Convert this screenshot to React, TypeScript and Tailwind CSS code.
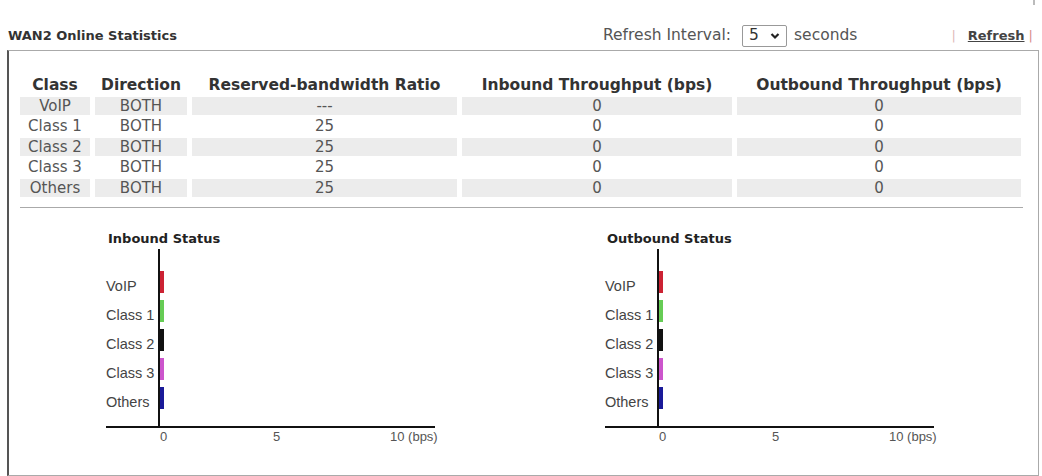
const rows = [
  { name: "VoIP", dir: "BOTH", ratio: "---", inb: "0", outb: "0" },
  { name: "Class 1", dir: "BOTH", ratio: "25", inb: "0", outb: "0" },
  { name: "Class 2", dir: "BOTH", ratio: "25", inb: "0", outb: "0" },
  { name: "Class 3", dir: "BOTH", ratio: "25", inb: "0", outb: "0" },
  { name: "Others", dir: "BOTH", ratio: "25", inb: "0", outb: "0" },
];

const bars = [
  { label: "VoIP", color: "bg-[#cc2233]", top: "top-[40px]", ltop: "top-[47px]" },
  { label: "Class 1", color: "bg-[#66cc55]", top: "top-[69px]", ltop: "top-[76px]" },
  { label: "Class 2", color: "bg-[#111111]", top: "top-[98px]", ltop: "top-[105px]" },
  { label: "Class 3", color: "bg-[#cc55cc]", top: "top-[127px]", ltop: "top-[134px]" },
  { label: "Others", color: "bg-[#1a1a99]", top: "top-[156px]", ltop: "top-[163px]" },
];

const gridCols = "grid grid-cols-[70px_92px_265px_270px_284px] gap-x-[5px]";

function StatusChart({ title }: { title: string }) {
  return (
    <div className="relative w-[340px] h-[220px]">
      <div className="absolute left-[2px] top-0 text-[13px] leading-[16px] font-bold text-[#222]">{title}</div>
      <div className="absolute left-[52px] top-[18px] w-[2px] h-[179px] bg-[#111]" />
      <div className="absolute left-0 top-[195px] w-[329px] h-[2px] bg-[#111]" />
      {bars.map((b) => (
        <div key={b.label}>
          <div className={`absolute left-[54px] w-[4px] h-[22px] ${b.color} ${b.top}`} />
          <div
            className={`absolute left-0 ${b.ltop} font-['Liberation_Sans',Arial,sans-serif] text-[14.5px] leading-[16px] text-[#444]`}
          >
            {b.label}
          </div>
        </div>
      ))}
      <div className="absolute top-[199px] left-[54px] font-['Liberation_Sans',Arial,sans-serif] text-[13px] leading-[14px] text-[#555]">0</div>
      <div className="absolute top-[199px] left-[167px] font-['Liberation_Sans',Arial,sans-serif] text-[13px] leading-[14px] text-[#555]">5</div>
      <div className="absolute top-[199px] left-[284px] font-['Liberation_Sans',Arial,sans-serif] text-[13px] leading-[14px] text-[#555] whitespace-nowrap">
        10 (bps)
      </div>
    </div>
  );
}

export default function App() {
  return (
    <div className="relative w-[1042px] h-[476px] bg-white overflow-hidden font-['DejaVu_Sans',Verdana,sans-serif]">
      <div className="absolute right-[7px] top-0 w-[2px] h-[5px] bg-[#bbb]" />

      <div className="flex items-center h-[24px] mt-[24px]">
        <div className="w-[603px] pl-[8px] text-[13px] font-bold text-[#333] whitespace-nowrap">WAN2 Online Statistics</div>
        <div className="flex items-center text-[15.5px] text-[#555] whitespace-nowrap">
          <span>Refresh Interval:</span>
          <div className="ml-[11px] w-[45px] h-[22px] border border-[#999] rounded-[2px] flex items-center justify-between px-[6px] text-[#333]">
            <span>5</span>
            <svg width="10" height="8" viewBox="0 0 10 8">
              <path d="M1.5 2 L5 5.5 L8.5 2" fill="none" stroke="#222" strokeWidth="2.2" />
            </svg>
          </div>
          <span className="ml-[7px]">seconds</span>
        </div>
        <div className="flex items-center ml-[94px] text-[13px] whitespace-nowrap">
          <span className="text-[#e0b8b8]">|</span>
          <span className="ml-[12px] font-bold text-[#444] underline">Refresh</span>
          <span className="ml-[4px] text-[#d88a8a]">|</span>
        </div>
      </div>

      <div className="ml-[7px] mt-[2px] w-[1032px] h-[426px] border border-[#aaa] border-l-2 border-l-[#555] pl-[11px] pt-[25px]">
        <div className="flex flex-col gap-y-[2.5px] text-[15px]">
          <div className={`${gridCols} h-[18px] leading-[18px] text-[15.5px] font-bold text-[#333] text-center whitespace-nowrap`}>
            <div>Class</div>
            <div>Direction</div>
            <div>Reserved-bandwidth Ratio</div>
            <div>Inbound Throughput (bps)</div>
            <div>Outbound Throughput (bps)</div>
          </div>
          {rows.map((r, i) => {
            const shade = i % 2 === 0 ? "bg-[#ececec]" : "bg-white";
            return (
              <div key={r.name} className={`${gridCols} h-[18px] leading-[18px] text-[#555] text-center whitespace-nowrap`}>
                <div className={shade}>{r.name}</div>
                <div className={shade}>{r.dir}</div>
                <div className={shade}>{r.ratio}</div>
                <div className={shade}>{r.inb}</div>
                <div className={shade}>{r.outb}</div>
              </div>
            );
          })}
        </div>
        <div className="mt-[10px] w-[1003px] h-px bg-[#aaa]" />
        <div className="flex gap-[159px] ml-[86px] mt-[23px]">
          <StatusChart title="Inbound Status" />
          <StatusChart title="Outbound Status" />
        </div>
      </div>
    </div>
  );
}
